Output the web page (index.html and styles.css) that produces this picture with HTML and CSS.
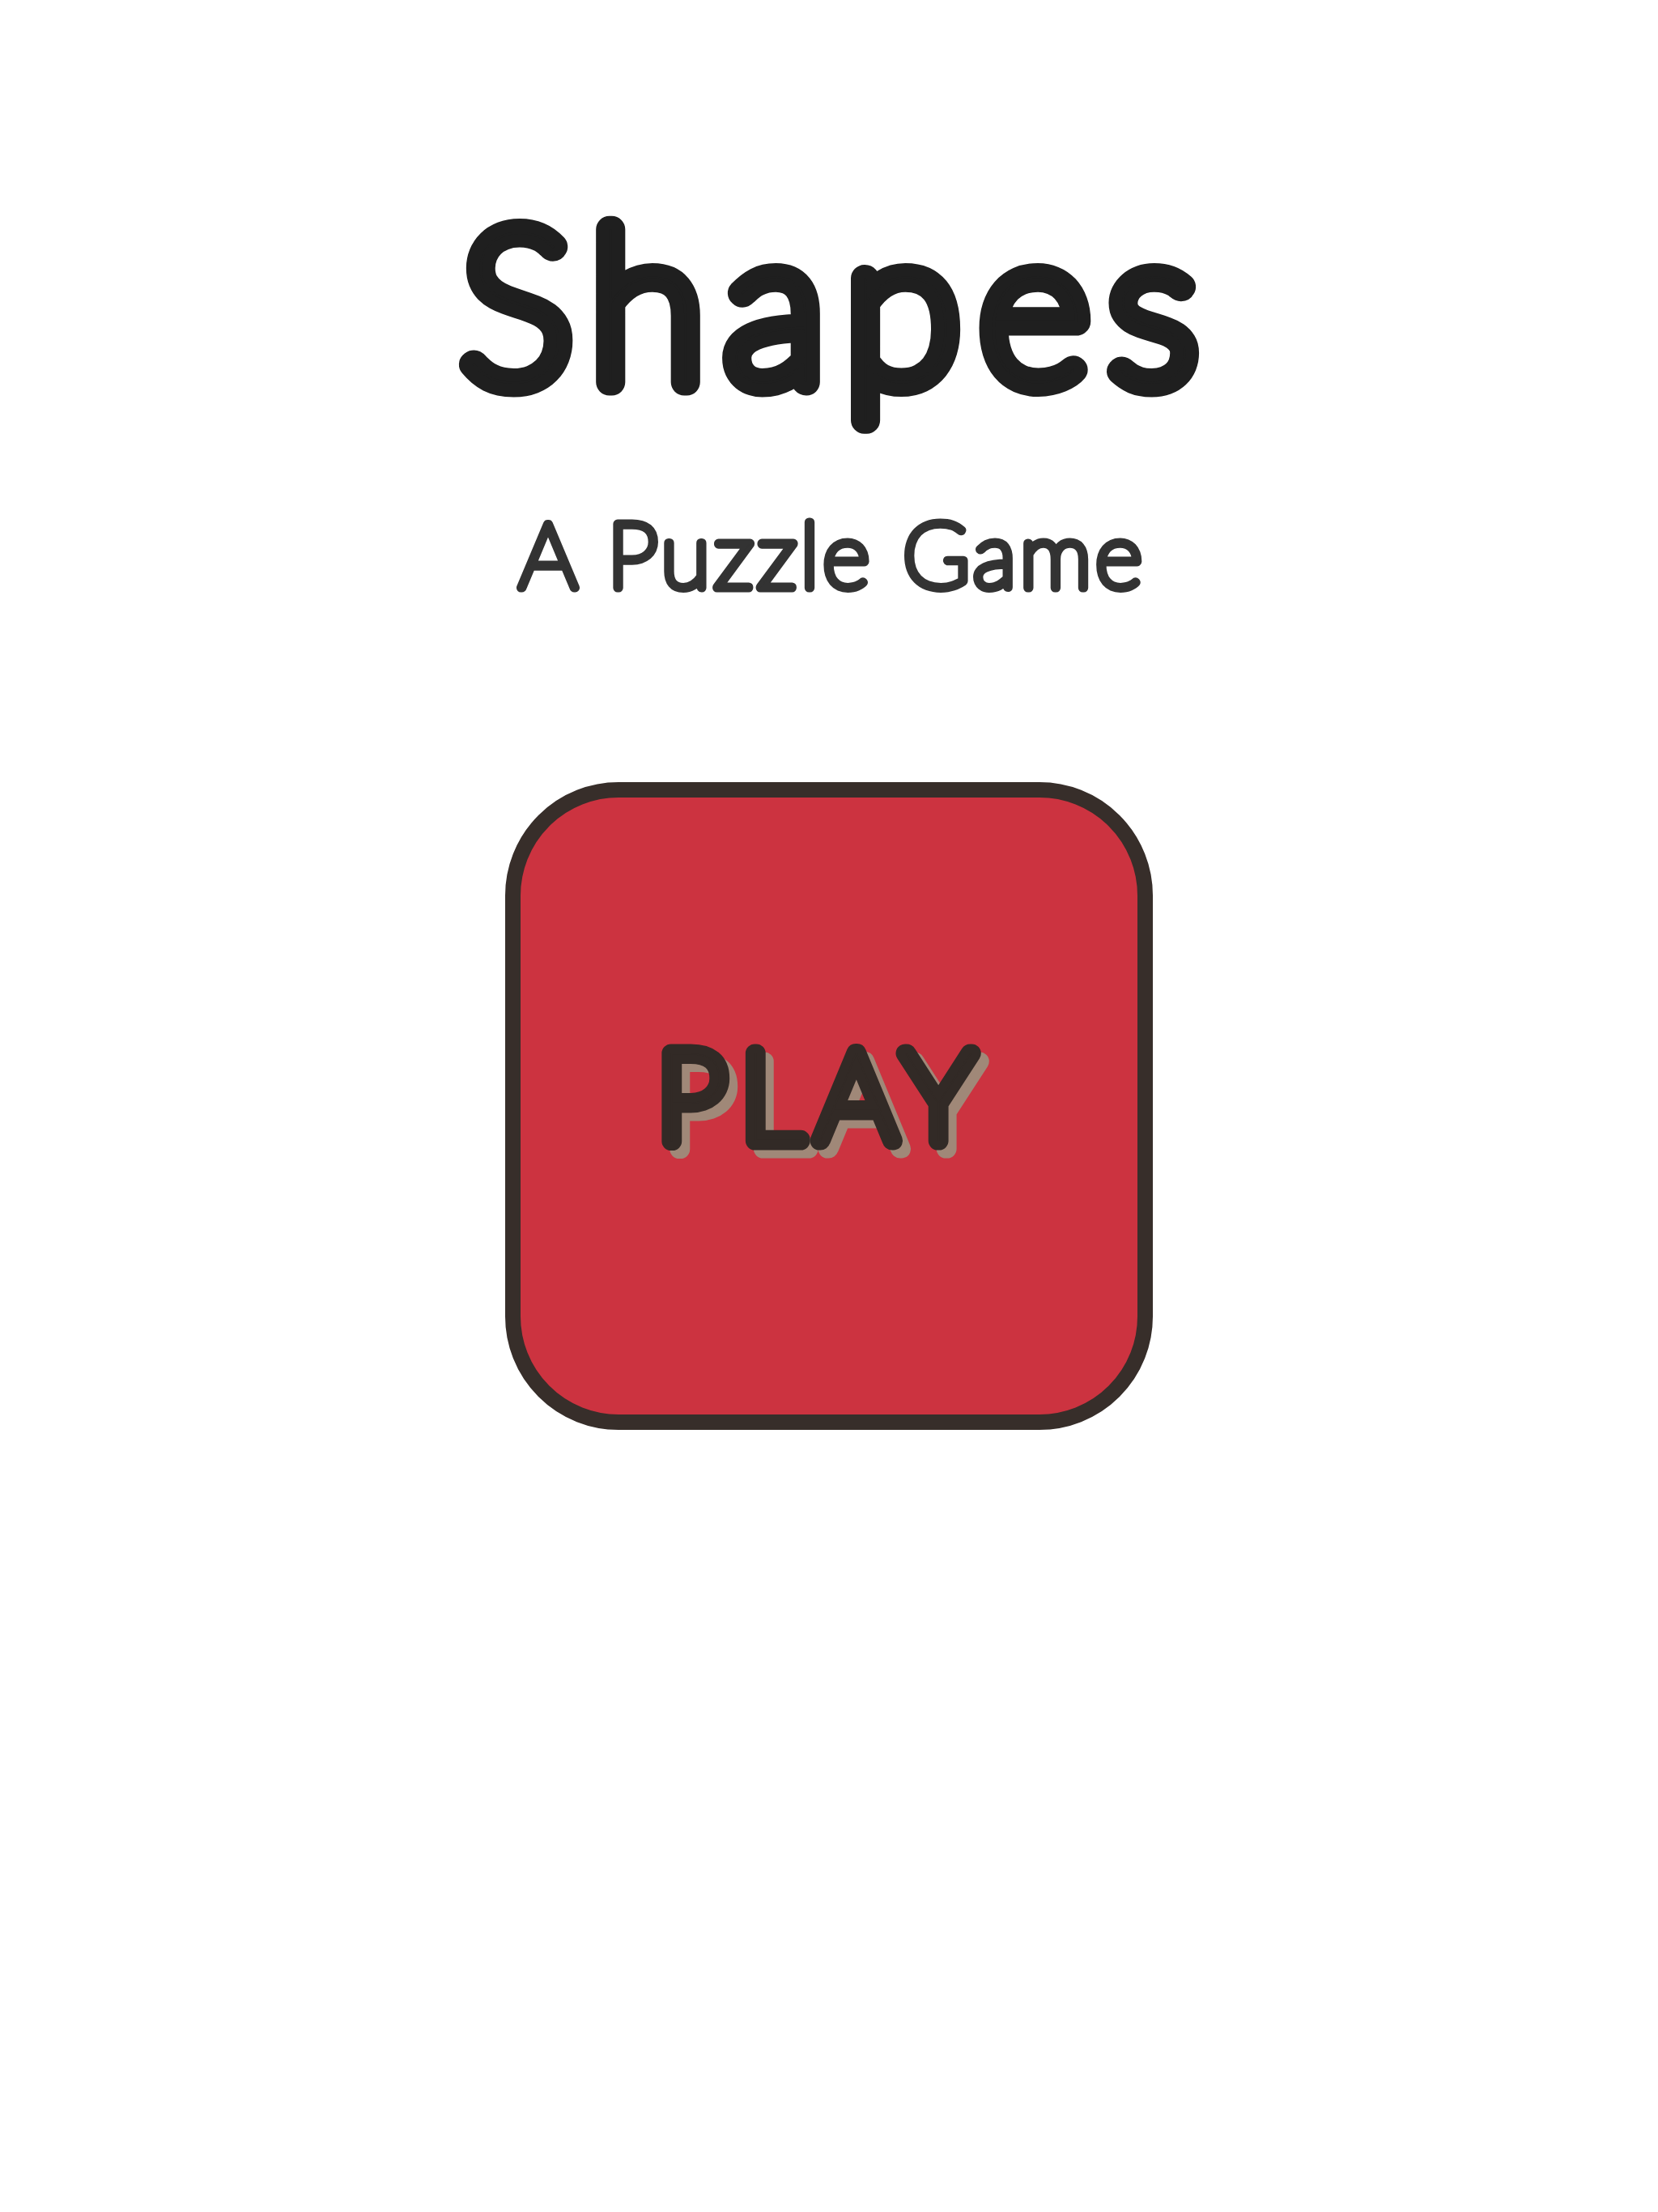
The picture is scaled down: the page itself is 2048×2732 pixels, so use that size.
FILE: index.html
```html
<!DOCTYPE html>
<html lang="en">
<head>
<meta charset="utf-8">
<title>Shapes</title>
<link rel="stylesheet" href="styles.css">
</head>
<body>
<main class="page">
  <svg class="title" width="1000" height="360" viewBox="0 0 1000 360">
    <text class="title-text" x="45" y="242" textLength="910" lengthAdjust="spacing">Shapes</text>
  </svg>
  <svg class="subtitle" width="1000" height="160" viewBox="0 0 1000 160">
    <text class="subtitle-text" x="117" y="126" textLength="770" lengthAdjust="spacing">A Puzzle Game</text>
  </svg>
  <button class="play">
    <svg class="play-label" width="500" height="220" viewBox="0 0 500 220">
      <text class="play-shadow" x="47" y="163" textLength="392" lengthAdjust="spacing">PLAY</text>
      <text class="play-text" x="37" y="153" textLength="392" lengthAdjust="spacing">PLAY</text>
    </svg>
  </button>
</main>
</body>
</html>
```
FILE: styles.css
```css
html, body {
  margin: 0;
  padding: 0;
  background: #ffffff;
}

.page {
  display: flex;
  flex-direction: column;
  align-items: center;
  padding-top: 230px;
  min-height: 2732px;
  box-sizing: border-box;
}

.title, .subtitle, .play-label {
  display: block;
}

.title-text, .subtitle-text, .play-text, .play-shadow {
  font-family: Lato, "Open Sans", sans-serif;
  font-weight: 100;
  stroke-linejoin: round;
  stroke-linecap: round;
  paint-order: stroke fill;
}

.title-text {
  font-size: 262px;
  fill: #1f1f1f;
  stroke: #1f1f1f;
  stroke-width: 33px;
}

.subtitle {
  margin-top: 10px;
}

.subtitle-text {
  font-size: 113px;
  fill: #333333;
  stroke: #333333;
  stroke-width: 11px;
}

.play {
  margin-top: 206px;
  width: 800px;
  height: 800px;
  box-sizing: border-box;
  padding: 0;
  border: 19px solid #372e2a;
  border-radius: 140px;
  background: #cc3340;
  display: flex;
  align-items: center;
  justify-content: center;
  cursor: pointer;
}

.play-text, .play-shadow {
  font-size: 154px;
  stroke-width: 23px;
}

.play-text {
  fill: #322a26;
  stroke: #322a26;
}

.play-shadow {
  fill: #a08878;
  stroke: #a08878;
}
```
